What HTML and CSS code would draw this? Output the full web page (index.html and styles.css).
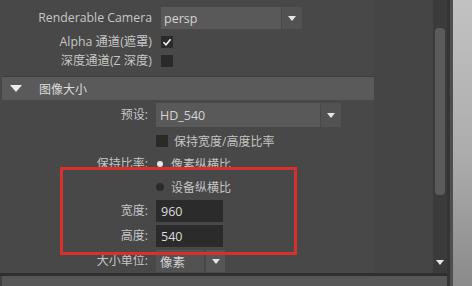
FILE: index.html
```html
<!DOCTYPE html>
<html>
<head>
<meta charset="utf-8">
<link rel="stylesheet" href="styles.css">
</head>
<body>
<div class="window">
  <div class="pane">
    <div class="scroll-area">
      <div class="content">
        <div class="col">
          <div class="row r-cam">
            <div class="label wide">Renderable Camera</div>
            <div class="dropdown dd-cam">
              <div class="dd-field">persp</div>
              <div class="dd-btn"><span class="tri"></span></div>
            </div>
          </div>
          <div class="row r-alpha">
            <div class="label wide">Alpha 通道(遮罩)</div>
            <div class="checkbox checked">
              <svg viewBox="0 0 12 12" width="12" height="12"><path d="M2.5 6.2 L5 8.7 L9.6 3.2" fill="none" stroke="#f2f2f2" stroke-width="1.6"/></svg>
            </div>
          </div>
          <div class="row r-depth">
            <div class="label wide">深度通道(Z 深度)</div>
            <div class="checkbox"></div>
          </div>

          <div class="section-head">
            <span class="head-tri"></span>
            <span class="head-title">图像大小</span>
          </div>

          <div class="row r-preset">
            <div class="label">预设:</div>
            <div class="dropdown dd-preset">
              <div class="dd-field">HD_540</div>
              <div class="dd-btn"><span class="tri"></span></div>
            </div>
          </div>
          <div class="row r-keep">
            <div class="label"></div>
            <div class="checkbox"></div>
            <span class="opt-text">保持宽度/高度比率</span>
          </div>
          <div class="row r-radio1">
            <div class="label">保持比率:</div>
            <span class="radio on"></span>
            <span class="opt-text">像素纵横比</span>
          </div>
          <div class="row r-radio2">
            <div class="label"></div>
            <span class="radio"></span>
            <span class="opt-text">设备纵横比</span>
          </div>
          <div class="row r-width">
            <div class="label">宽度:</div>
            <div class="numfield">960</div>
          </div>
          <div class="row r-height">
            <div class="label">高度:</div>
            <div class="numfield">540</div>
          </div>
          <div class="row r-unit">
            <div class="label">大小单位:</div>
            <div class="dropdown dd-unit">
              <div class="dd-field">像素</div>
              <div class="dd-btn"><span class="tri"></span></div>
            </div>
          </div>
        </div>
      </div>
      <div class="vscroll">
        <div class="thumb"></div>
        <div class="down"><span class="tri"></span></div>
      </div>
    </div>
    <div class="hline"></div>
    <div class="hbar"></div>
  </div>
  <div class="edge"></div>
  <div class="outside"></div>
  <div class="highlight"></div>
</div>
</body>
</html>
```

FILE: styles.css
```css
* { box-sizing: border-box; }
html, body { margin: 0; padding: 0; }
body {
  background: #444444;
  font-family: "Open Sans", "Noto Sans CJK SC", sans-serif;
  font-size: 12px;
  color: #c6c6c6;
}
.window {
  position: relative;
  width: 472px;
  height: 286px;
  display: flex;
  overflow: hidden;
}
.pane {
  width: 447px;
  display: flex;
  flex-direction: column;
}
.scroll-area {
  height: 273px;
  display: flex;
}
.content {
  width: 433px;
  background: #454545;
}
.col {
  width: 374px;
  height: 100%;
  background: #484848;
  padding-top: 7px;
}
.row {
  display: flex;
  align-items: center;
}
.label {
  width: 148px;
  margin-right: 8px;
  text-align: right;
  white-space: nowrap;
  line-height: 16px;
}
.label.wide {
  width: 152px;
  margin-right: 9px;
  font-size: 12.3px;
}
.r-cam { height: 22px; }
.r-alpha { height: 20px; margin-top: 3px; }
.r-depth { height: 18px; }
.r-preset { height: 24px; margin-top: 3px; }
.r-keep { height: 28px; }
.r-radio1 { height: 18px; }
.r-radio2 { height: 18px; margin-top: 5px; }
.r-width { height: 22px; margin-top: 4px; }
.r-height { height: 22px; margin-top: 3px; }
.r-unit { height: 22px; margin-top: 3px; }

.dropdown { display: flex; height: 100%; }
.dd-field {
  background: #595959;
  color: #d4d4d4;
  padding-left: 4px;
  display: flex;
  align-items: center;
  font-size: 12.5px;
}
.dd-btn {
  background: #525252;
  display: flex;
  align-items: center;
  justify-content: center;
  margin-left: 1px;
}
.tri {
  width: 0; height: 0;
  border-left: 4px solid transparent;
  border-right: 4px solid transparent;
  border-top: 5px solid #e6e6e6;
}
.dd-cam .dd-field { width: 120px; padding-left: 3px; }
.dd-cam .dd-btn { width: 20px; }
.dd-preset .dd-field { width: 164px; }
.dd-preset .dd-btn { width: 20px; }
.dd-unit .dd-field { width: 48px; background: #525252; }
.dd-unit .dd-btn { width: 19px; margin-left: 2px; background: #565656; }

.checkbox {
  width: 12px;
  height: 12px;
  background: #2a2a2a;
  flex: none;
}
.checkbox svg { display: block; }
.opt-text {
  margin-left: 6px;
  color: #c4c4c4;
}
.radio {
  width: 8px;
  height: 8px;
  border-radius: 50%;
  background: #2c2c2c;
  margin-left: 0px;
  margin-right: 7px;
  flex: none;
}
.radio.on {
  width: 6px;
  height: 6px;
  margin-left: 1px;
  margin-right: 8px;
  background: #e6e6e6;
}
.radio + .opt-text { margin-left: 0; }
.numfield {
  width: 67px;
  height: 100%;
  background: #2b2b2b;
  color: #dcdcdc;
  padding-left: 5px;
  display: flex;
  align-items: center;
  font-size: 12.5px;
}

.section-head {
  margin-top: 6px;
  margin-left: 2px;
  height: 24px;
  background: #5a5a5a;
  border-top: 1px solid #3e3e3e;
  display: flex;
  align-items: center;
}
.head-tri {
  width: 0; height: 0;
  margin-left: 8px;
  border-left: 6px solid transparent;
  border-right: 6px solid transparent;
  border-top: 7px solid #ececec;
}
.head-title {
  margin-left: 17px;
  color: #dcdcdc;
}

.vscroll {
  width: 14px;
  background: #3b3b3b;
  position: relative;
  display: flex;
  flex-direction: column;
  align-items: center;
  padding-top: 28px;
}
.thumb {
  width: 10px;
  height: 167px;
  border-radius: 4px;
  background: #5b5b5b;
}
.down {
  margin-top: auto;
  margin-bottom: 8px;
  display: flex;
}
.hline {
  height: 3px;
  background: #2f2f2f;
}
.hbar {
  flex: 1;
  background: #575757;
  border-left: 2px solid #404040;
}
.edge {
  width: 6px;
  background: linear-gradient(to right, #353535 0, #353535 3px, #4f4f4f 3px);
}
.outside {
  flex: 1;
  background: linear-gradient(to bottom, #c2c2c2 0%, #acacac 55%, #8a8a8a 100%);
}
.highlight {
  position: absolute;
  left: 60px;
  top: 167px;
  width: 237px;
  height: 88px;
  border: 3px solid #d8312b;
}
```
